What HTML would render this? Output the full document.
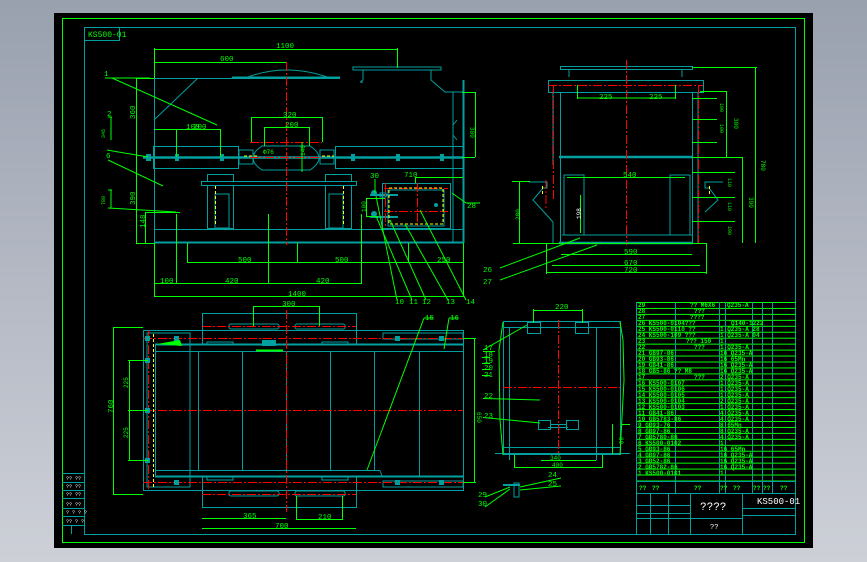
<!DOCTYPE html>
<html><head><meta charset="utf-8"><style>
html,body{margin:0;padding:0;width:867px;height:562px;overflow:hidden;background:linear-gradient(180deg,#99a0ae 0%,#b4b9c4 50%,#cdd0d7 100%);}
svg{position:absolute;left:0;top:0}
text{font-family:"Liberation Mono","DejaVu Sans Mono",monospace;}
</style></head><body>
<svg width="867" height="562" viewBox="0 0 867 562" xmlns="http://www.w3.org/2000/svg">
<defs>
<pattern id="rows" x="0" y="302" width="10" height="5.95" patternUnits="userSpaceOnUse"><line x1="0" y1="0.5" x2="10" y2="0.5" stroke="#00ff00" stroke-width="1"/></pattern>
</defs>
<rect x="54" y="13" width="759" height="535" fill="#000"/>
<rect x="62.5" y="18.5" width="742" height="524" fill="none" stroke="#00ff00"/>
<rect x="84.5" y="27.5" width="711" height="507" fill="none" stroke="#00a0a0"/>
<rect x="84.5" y="27.5" width="35" height="13" fill="none" stroke="#00a0a0"/>
<text x="88" y="37" font-size="8" fill="#00ff00">KS500-01</text>

<g fill="none" stroke="#00a0a0" stroke-width="1">
<line x1="154" y1="78.5" x2="340" y2="78.5"/>
<line x1="232" y1="77.5" x2="340" y2="77.5" stroke-width="2"/>
<path d="M245 78 Q286 62 330 78"/>
<line x1="154.5" y1="78" x2="154.5" y2="243"/>
<line x1="198" y1="78" x2="154" y2="120"/>
<rect x="353" y="67" width="88" height="3"/>
<path d="M431 70 L431 80 L445 92 L453 92 L453 243"/>
<path d="M363 70 L363 80 Q358 83 363 82"/>
<line x1="463.5" y1="80" x2="463.5" y2="243" stroke-width="2"/>
<line x1="453" y1="92" x2="463" y2="92"/>
<path d="M457 120 L453 125 L453 135 L457 140"/>
<rect x="153.5" y="146.5" width="85" height="22"/>
<rect x="335.5" y="146.5" width="128" height="22"/>
<rect x="239" y="150" width="14" height="14"/>
<rect x="320" y="150" width="14" height="14"/>
<path d="M262 146 L310 146 Q328 158 310 170 L262 170 Q244 158 262 146 Z"/>
<line x1="143" y1="157.5" x2="463" y2="157.5" stroke-width="2.5"/>
<rect x="207.5" y="174.5" width="26" height="7"/>
<rect x="325.5" y="174.5" width="26" height="7"/>
<rect x="201.5" y="181.5" width="155" height="4"/>
<rect x="207.5" y="185.5" width="26" height="43"/>
<rect x="325.5" y="185.5" width="26" height="43"/>
<rect x="215" y="194" width="14" height="34"/>
<rect x="329" y="194" width="14" height="34"/>
<line x1="154" y1="229.5" x2="463" y2="229.5"/>
<line x1="154" y1="242.5" x2="463" y2="242.5" stroke-width="2"/>
<rect x="382.5" y="183.5" width="68" height="45"/>
<rect x="388" y="190" width="56" height="36"/>
<rect x="380" y="193" width="6" height="4"/>
<line x1="370" y1="195" x2="398" y2="195" stroke-width="2"/>
<line x1="370" y1="217" x2="398" y2="217" stroke-width="2"/>

<rect x="560.5" y="66.5" width="132" height="3"/>
<line x1="569" y1="69" x2="569" y2="77"/><line x1="682" y1="69" x2="682" y2="77"/>
<rect x="548.5" y="80.5" width="155" height="12"/>
<rect x="560.5" y="92.5" width="132" height="151"/>
<line x1="553" y1="92" x2="553" y2="165"/><line x1="698" y1="92" x2="698" y2="243"/>
<line x1="559" y1="157" x2="693" y2="157" stroke-width="2.5"/>
<line x1="559" y1="243" x2="693" y2="243" stroke-width="2.5"/>
<rect x="564" y="175" width="20" height="60"/>
<rect x="670" y="175" width="20" height="60"/>
<line x1="562" y1="235" x2="692" y2="235"/>
<path d="M529 182 L547 182 L547 188 L543 188 L533 200 L553 222 L553 243"/>
<path d="M723 182 L705 182 L705 188 L709 188 L718 200 L705 212"/>

<rect x="143.5" y="330.5" width="320" height="160"/>
<line x1="155" y1="344.5" x2="463" y2="344.5" stroke-width="2"/>
<line x1="155" y1="351.5" x2="463" y2="351.5"/>
<line x1="155" y1="470.5" x2="380" y2="470.5"/>
<line x1="380" y1="470.5" x2="382" y2="476"/>
<line x1="155" y1="476.5" x2="463" y2="476.5" stroke-width="2"/>
<line x1="155.5" y1="344" x2="155.5" y2="476"/>
<line x1="198.5" y1="351" x2="198.5" y2="470"/><line x1="242.5" y1="351" x2="242.5" y2="470"/>
<line x1="286.5" y1="351" x2="286.5" y2="470"/><line x1="330.5" y1="351" x2="330.5" y2="470"/>
<line x1="374.5" y1="351" x2="374.5" y2="470"/><line x1="419.5" y1="351" x2="419.5" y2="476"/>
<rect x="202.5" y="313.5" width="154" height="31"/>
<rect x="202.5" y="476.5" width="154" height="31"/>
<rect x="229" y="324" width="50" height="5" rx="2"/><rect x="295" y="324" width="50" height="5" rx="2"/>
<rect x="229" y="491" width="50" height="5" rx="2"/><rect x="295" y="491" width="50" height="5" rx="2"/>
<rect x="147" y="333" width="43" height="154"/>
<rect x="383" y="333" width="80" height="6"/><rect x="383" y="481" width="80" height="6"/>
<rect x="207" y="342" width="26" height="3"/><rect x="322" y="342" width="26" height="3"/>
<rect x="207" y="477" width="26" height="3"/><rect x="322" y="477" width="26" height="3"/>

<rect x="503.5" y="321.5" width="117" height="133"/>
<line x1="503" y1="327.5" x2="620" y2="327.5"/>
<line x1="503" y1="447.5" x2="620" y2="447.5"/>
<line x1="509.5" y1="327" x2="509.5" y2="460"/><line x1="596.5" y1="327" x2="596.5" y2="460"/>
<line x1="495" y1="453.5" x2="630" y2="453.5"/>
<rect x="527.5" y="322.5" width="13" height="11"/><rect x="575.5" y="322.5" width="13" height="11"/>
<rect x="538.5" y="420.5" width="12" height="9"/><rect x="566.5" y="420.5" width="12" height="9"/>
<line x1="550" y1="424.5" x2="566" y2="424.5"/><line x1="548" y1="427.5" x2="568" y2="427.5"/>
<line x1="503" y1="485" x2="520" y2="485" stroke-width="2"/>
<rect x="514" y="483" width="5" height="14"/>
</g>

<g stroke="#ff0000" stroke-width="1" stroke-dasharray="9,2,2,2" fill="none">
<line x1="286.5" y1="62" x2="286.5" y2="245"/>
<line x1="250" y1="157.5" x2="322" y2="157.5"/>
<line x1="250" y1="142.5" x2="322" y2="142.5"/>
<line x1="626.5" y1="60" x2="626.5" y2="245"/>
<line x1="548" y1="85.5" x2="703" y2="85.5"/>
<line x1="553.5" y1="85" x2="553.5" y2="200"/><line x1="698.5" y1="85" x2="698.5" y2="243"/>
<line x1="143" y1="410.5" x2="463" y2="410.5"/>
<line x1="286.5" y1="310" x2="286.5" y2="512"/>
<line x1="143" y1="338.5" x2="463" y2="338.5"/>
<line x1="143" y1="482.5" x2="463" y2="482.5"/>
<line x1="202" y1="326.5" x2="356" y2="326.5"/>
<line x1="202" y1="494.5" x2="356" y2="494.5"/>
<line x1="148.5" y1="330" x2="148.5" y2="491"/>
<line x1="558.5" y1="320" x2="558.5" y2="455"/>
<line x1="503" y1="387.5" x2="620" y2="387.5"/>
<line x1="384" y1="188.5" x2="448" y2="188.5"/>
<line x1="384" y1="211.5" x2="448" y2="211.5"/>
<line x1="417.5" y1="183" x2="417.5" y2="228"/>
<line x1="385.5" y1="183" x2="385.5" y2="228"/>
<line x1="546" y1="180" x2="546" y2="210"/>
</g>
<g stroke="#ffff00" stroke-dasharray="3,2" fill="none">
<rect x="389" y="188" width="54" height="36"/>
<line x1="215.5" y1="186" x2="215.5" y2="226"/><line x1="343.5" y1="186" x2="343.5" y2="226"/>
<line x1="244" y1="156" x2="258" y2="156"/><line x1="322" y1="156" x2="334" y2="156"/>
<line x1="153.5" y1="334" x2="153.5" y2="487"/>
<line x1="542.5" y1="186" x2="542.5" y2="194"/><line x1="709.5" y1="186" x2="709.5" y2="194"/>
</g>
<g fill="#00a0a0">
<rect x="146" y="154" width="5" height="7"/><rect x="175" y="154" width="4" height="7"/><rect x="220" y="154" width="4" height="7"/>
<rect x="351" y="154" width="4" height="7"/><rect x="396" y="154" width="4" height="7"/><rect x="440" y="154" width="4" height="7"/>
<rect x="145" y="336" width="5" height="5"/><rect x="174" y="336" width="5" height="5"/><rect x="395" y="336" width="5" height="5"/><rect x="439" y="336" width="5" height="5"/>
<rect x="145" y="358" width="5" height="5"/><rect x="145" y="408" width="5" height="5"/><rect x="145" y="458" width="5" height="5"/>
<rect x="174" y="480" width="5" height="5"/><rect x="395" y="480" width="5" height="5"/><rect x="439" y="480" width="5" height="5"/>
<rect x="262" y="340" width="14" height="6"/>
<circle cx="374" cy="193" r="3"/><circle cx="374" cy="214" r="3"/><circle cx="436" cy="205" r="2"/>
</g>

<g stroke="#00ff00" stroke-width="1" fill="none">
<line x1="154" y1="49.5" x2="397" y2="49.5"/><line x1="154.5" y1="48" x2="154.5" y2="78"/><line x1="397.5" y1="48" x2="397.5" y2="68"/>
<line x1="154" y1="62.5" x2="286" y2="62.5"/>
<line x1="136.5" y1="78" x2="136.5" y2="243"/><line x1="136" y1="78.5" x2="154" y2="78.5"/><line x1="136" y1="243.5" x2="154" y2="243.5"/>
<line x1="145.5" y1="212" x2="145.5" y2="243"/><line x1="145" y1="212.5" x2="180" y2="212.5"/>
<line x1="154" y1="129.5" x2="220" y2="129.5"/><line x1="176.5" y1="129" x2="176.5" y2="157"/><line x1="220.5" y1="129" x2="220.5" y2="157"/>
<line x1="251" y1="117.5" x2="322" y2="117.5"/><line x1="251.5" y1="117" x2="251.5" y2="142"/><line x1="322.5" y1="117" x2="322.5" y2="142"/>
<line x1="264" y1="127.5" x2="309" y2="127.5"/><line x1="264.5" y1="127" x2="264.5" y2="146"/><line x1="309.5" y1="127" x2="309.5" y2="146"/>
<line x1="302" y1="142" x2="302" y2="172"/>
<line x1="462" y1="92.5" x2="475" y2="92.5"/><line x1="475.5" y1="92" x2="475.5" y2="157"/><line x1="462" y1="157.5" x2="475" y2="157.5"/>
<line x1="187" y1="262.5" x2="463" y2="262.5"/><line x1="187.5" y1="243" x2="187.5" y2="263"/><line x1="297.5" y1="243" x2="297.5" y2="263"/><line x1="408.5" y1="243" x2="408.5" y2="263"/>
<line x1="154" y1="283.5" x2="361" y2="283.5"/><line x1="176.5" y1="214" x2="176.5" y2="284"/><line x1="268.5" y1="214" x2="268.5" y2="284"/><line x1="361.5" y1="214" x2="361.5" y2="284"/>
<line x1="154" y1="296.5" x2="463" y2="296.5"/><line x1="154.5" y1="243" x2="154.5" y2="297"/><line x1="463.5" y1="243" x2="463.5" y2="297"/>
<line x1="415" y1="177.5" x2="463" y2="177.5"/><line x1="415.5" y1="177" x2="415.5" y2="183"/>
<line x1="366" y1="198.5" x2="385" y2="198.5"/><line x1="366" y1="216.5" x2="378" y2="216.5"/><line x1="366.5" y1="198" x2="366.5" y2="217"/>
<line x1="375" y1="179" x2="375" y2="193"/>
<line x1="105" y1="78" x2="150" y2="78"/><line x1="112" y1="78" x2="217" y2="125"/>
<line x1="107" y1="150" x2="148" y2="157"/><line x1="108" y1="160" x2="163" y2="186"/>
<line x1="108" y1="208" x2="176" y2="212"/>
<line x1="108" y1="117" x2="112" y2="117"/><line x1="111" y1="117" x2="111" y2="140"/>
<line x1="108" y1="190" x2="112" y2="190"/><line x1="111" y1="190" x2="111" y2="208"/>
<line x1="376" y1="196" x2="397" y2="300"/><line x1="376" y1="216" x2="412" y2="300"/>
<line x1="390" y1="220" x2="426" y2="300"/><line x1="405" y1="224" x2="448" y2="300"/><line x1="420" y1="210" x2="466" y2="300"/>
<line x1="452" y1="193" x2="466" y2="203"/><line x1="466" y1="203" x2="480" y2="203"/>
<line x1="577" y1="98" x2="675" y2="98"/><line x1="577.5" y1="85" x2="577.5" y2="99"/><line x1="675.5" y1="85" x2="675.5" y2="99"/>
<line x1="692" y1="67.5" x2="757" y2="67.5"/><line x1="755.5" y1="67" x2="755.5" y2="243"/>
<line x1="700" y1="91.5" x2="727" y2="91.5"/><line x1="726.5" y1="91" x2="726.5" y2="157"/>
<line x1="692" y1="157.5" x2="743" y2="157.5"/><line x1="742.5" y1="157" x2="742.5" y2="243"/>
<line x1="692" y1="98.5" x2="717" y2="98.5"/><line x1="692" y1="119.5" x2="717" y2="119.5"/><line x1="692" y1="142.5" x2="717" y2="142.5"/>
<line x1="692" y1="172.5" x2="735" y2="172.5"/><line x1="692" y1="197.5" x2="735" y2="197.5"/><line x1="692" y1="221.5" x2="735" y2="221.5"/>
<line x1="567" y1="177.5" x2="685" y2="177.5"/>
<line x1="580.5" y1="195" x2="580.5" y2="233"/>
<line x1="512" y1="181.5" x2="530" y2="181.5"/><line x1="519.5" y1="181" x2="519.5" y2="243"/>
<line x1="513" y1="243.5" x2="706" y2="243.5"/>
<line x1="561" y1="254.5" x2="692" y2="254.5"/><line x1="552" y1="265.5" x2="700" y2="265.5"/><line x1="546" y1="272.5" x2="706" y2="272.5"/>
<line x1="546.5" y1="243" x2="546.5" y2="274"/><line x1="706.5" y1="243" x2="706.5" y2="274"/>
<line x1="500" y1="268" x2="580" y2="238"/><line x1="500" y1="280" x2="597" y2="245"/>
<line x1="113.5" y1="327" x2="113.5" y2="494"/><line x1="113" y1="327.5" x2="143" y2="327.5"/><line x1="113" y1="494.5" x2="143" y2="494.5"/>
<line x1="129.5" y1="360" x2="129.5" y2="460"/><line x1="128" y1="360.5" x2="148" y2="360.5"/><line x1="128" y1="410.5" x2="148" y2="410.5"/><line x1="128" y1="460.5" x2="148" y2="460.5"/>
<line x1="463" y1="338.5" x2="476" y2="338.5"/><line x1="474.5" y1="338" x2="474.5" y2="482"/><line x1="463" y1="482.5" x2="476" y2="482.5"/>
<line x1="253" y1="306.5" x2="319" y2="306.5"/><line x1="253.5" y1="306" x2="253.5" y2="326"/><line x1="319.5" y1="306" x2="319.5" y2="326"/>
<line x1="202" y1="518.5" x2="286" y2="518.5"/><line x1="296" y1="519.5" x2="342" y2="519.5"/>
<line x1="296.5" y1="496" x2="296.5" y2="520"/><line x1="342.5" y1="496" x2="342.5" y2="520"/>
<line x1="202" y1="528.5" x2="356" y2="528.5"/>
<line x1="424" y1="318" x2="367" y2="470"/><line x1="424" y1="318" x2="433" y2="318"/>
<line x1="449" y1="318" x2="444" y2="349"/><line x1="449" y1="318" x2="458" y2="318"/>
<path d="M157 344 L180 340 L182 346 Z" fill="#00ff00" stroke="none"/>
<line x1="256" y1="350.5" x2="283" y2="350.5" stroke-width="2"/>
<line x1="533.5" y1="309" x2="533.5" y2="323"/><line x1="582.5" y1="309" x2="582.5" y2="323"/><line x1="533" y1="310.5" x2="583" y2="310.5"/>
<line x1="541" y1="460.5" x2="596" y2="460.5"/><line x1="514" y1="467.5" x2="602" y2="467.5"/>
<line x1="514.5" y1="455" x2="514.5" y2="468"/><line x1="602.5" y1="455" x2="602.5" y2="468"/>
<path d="M503 322 L499 350 L500 420 L503 455"/>
<path d="M620 322 L623 340 L624 380 L620 455"/>
<line x1="622" y1="424.5" x2="630" y2="424.5"/><line x1="612.5" y1="424" x2="612.5" y2="454"/>
<line x1="483" y1="350" x2="527" y2="325"/><line x1="483" y1="351.5" x2="495" y2="351.5"/>
<line x1="483" y1="398.5" x2="540" y2="400"/><line x1="483" y1="417.5" x2="540" y2="423"/>
<line x1="520" y1="487" x2="561" y2="478"/><line x1="520" y1="490" x2="561" y2="486"/>
<line x1="485" y1="497" x2="510" y2="487"/><line x1="485" y1="507" x2="510" y2="489"/>
<line x1="482" y1="357.5" x2="490" y2="357.5"/><line x1="482" y1="363.5" x2="490" y2="363.5"/><line x1="482" y1="369.5" x2="490" y2="369.5"/><line x1="482" y1="375.5" x2="490" y2="375.5"/>
</g>

<g font-size="7.5" fill="#00ff00">
<text x="276" y="48">1100</text><text x="220" y="61">600</text>
<text x="186" y="129">100</text><text x="193" y="129">200</text>
<text x="283" y="117">320</text><text x="285" y="127">200</text>
<text x="305" y="156" font-size="6" transform="rotate(-90 305 156)">140</text>
<text x="263" y="154" font-size="6">Φ76</text>
<text x="404" y="177">710</text><text x="370" y="178">30</text>
<text x="470" y="127" transform="rotate(90 470 127)" font-size="6">300</text>
<text x="135" y="119" transform="rotate(-90 135 119)">360</text>
<text x="135" y="205" transform="rotate(-90 135 205)">390</text>
<text x="145" y="228" transform="rotate(-90 145 228)">148</text>
<text x="366" y="212" font-size="6" transform="rotate(-90 366 212)">100</text>
<text x="238" y="262">500</text><text x="335" y="262">500</text><text x="437" y="262">250</text>
<text x="160" y="283">100</text><text x="225" y="283">420</text><text x="316" y="283">420</text>
<text x="288" y="296">1400</text>
<text x="104" y="76">1</text><text x="107" y="116">2</text><text x="106" y="158">6</text>
<text x="105" y="138" font-size="5" transform="rotate(-90 105 138)">345</text>
<text x="105" y="205" font-size="5" transform="rotate(-90 105 205)">789</text>
<text x="395" y="304">10</text><text x="409" y="304">11</text><text x="422" y="304">12</text><text x="446" y="304">13</text><text x="466" y="304">14</text>
<text x="467" y="208">28</text>
<text x="599" y="99">225</text><text x="649" y="99">225</text>
<text x="623" y="177">540</text>
<text x="581" y="219" fill="#fff" font-size="6" transform="rotate(-90 581 219)">198</text>
<text x="624" y="254">590</text><text x="624" y="265">670</text><text x="624" y="272">720</text>
<text x="520" y="220" transform="rotate(-90 520 220)" font-size="6">280</text>
<text x="761" y="160" transform="rotate(90 761 160)" font-size="6">780</text>
<text x="720" y="103" transform="rotate(90 720 103)" font-size="5">100</text>
<text x="720" y="124" transform="rotate(90 720 124)" font-size="5">100</text>
<text x="734" y="118" transform="rotate(90 734 118)" font-size="6">300</text>
<text x="749" y="197" transform="rotate(90 749 197)" font-size="6">390</text>
<text x="728" y="178" transform="rotate(90 728 178)" font-size="5">110</text>
<text x="728" y="202" transform="rotate(90 728 202)" font-size="5">110</text>
<text x="728" y="226" transform="rotate(90 728 226)" font-size="5">100</text>
<text x="483" y="272">26</text><text x="483" y="284">27</text>
<text x="282" y="306">300</text>
<text x="113" y="413" transform="rotate(-90 113 413)">760</text>
<text x="128" y="388" font-size="6" transform="rotate(-90 128 388)">225</text>
<text x="128" y="438" font-size="6" transform="rotate(-90 128 438)">225</text>
<text x="477" y="412" font-size="6" transform="rotate(90 477 412)">650</text>
<text x="243" y="518">365</text><text x="318" y="519">210</text><text x="275" y="528">700</text>
<text x="425" y="320">15</text><text x="450" y="320">16</text>
<text x="555" y="309">220</text>
<text x="484" y="350">17</text><text x="484" y="357">18</text><text x="484" y="363">19</text><text x="484" y="370">20</text><text x="484" y="377">21</text>
<text x="484" y="398">22</text><text x="484" y="418">23</text>
<text x="550" y="460" font-size="6">340</text><text x="552" y="467" font-size="6">400</text>
<text x="619" y="437" font-size="6" transform="rotate(90 619 437)">80</text>
<text x="548" y="477">24</text><text x="548" y="486">25</text>
<text x="478" y="497">29</text><text x="478" y="506">30</text>
</g>

<rect x="636" y="302" width="160" height="179" fill="url(#rows)"/>
<g stroke="#00a0a0" fill="none">
<line x1="636.5" y1="302" x2="636.5" y2="534"/>
<line x1="675.5" y1="302" x2="675.5" y2="493"/>
<line x1="719.5" y1="302" x2="719.5" y2="493"/>
<line x1="725.5" y1="302" x2="725.5" y2="493"/>
<line x1="752.5" y1="302" x2="752.5" y2="493"/>
<line x1="762.5" y1="302" x2="762.5" y2="493"/>
<line x1="772.5" y1="302" x2="772.5" y2="493"/>
<line x1="636" y1="481.5" x2="796" y2="481.5"/>
<line x1="636" y1="493.5" x2="796" y2="493.5"/>
<line x1="690.5" y1="493" x2="690.5" y2="534"/>
<line x1="742.5" y1="493" x2="742.5" y2="534"/>
<line x1="690" y1="518.5" x2="742" y2="518.5"/>
<line x1="742" y1="508.5" x2="796" y2="508.5"/>
<line x1="742" y1="515.5" x2="796" y2="515.5"/>
<line x1="636" y1="505.5" x2="690" y2="505.5"/><line x1="636" y1="513.5" x2="690" y2="513.5"/><line x1="636" y1="518.5" x2="690" y2="518.5"/>
<line x1="650.5" y1="493" x2="650.5" y2="534"/><line x1="668.5" y1="493" x2="668.5" y2="534"/>
<line x1="62" y1="473.5" x2="84" y2="473.5"/><line x1="62" y1="482.5" x2="84" y2="482.5"/><line x1="62" y1="490.5" x2="84" y2="490.5"/>
<line x1="62" y1="498.5" x2="84" y2="498.5"/><line x1="62" y1="508.5" x2="84" y2="508.5"/><line x1="62" y1="516.5" x2="84" y2="516.5"/><line x1="62" y1="525.5" x2="84" y2="525.5"/>
<line x1="71.5" y1="525" x2="71.5" y2="534"/>
</g>
<g font-size="6" font-weight="bold" fill="#00ff00">
<text x="638" y="307">29</text><text x="690" y="307">?? M6X6</text><text x="727" y="307">Q235-A</text>
<text x="638" y="313">28</text><text x="694" y="313">???</text>
<text x="638" y="319">27</text><text x="690" y="319">????</text>
<text x="638" y="325">26 KS500-0104???</text><text x="731" y="325">Q140-1222</text>
<text x="638" y="331">25 KS500-0110 ??</text><text x="720" y="331">1 Q235-A 28</text>
<text x="638" y="337">24 KS500-109 ???</text><text x="720" y="337">1 Q235-A 04</text>
<text x="638" y="343">23</text><text x="686" y="343">??? 150</text><text x="720" y="343">1</text>
<text x="638" y="349">22</text><text x="694" y="349">???</text><text x="720" y="349">1 Q235-A</text>
<text x="638" y="355">21 GB97-86</text><text x="720" y="355">16 Q235-A</text>
<text x="638" y="361">20 GB93-86</text><text x="720" y="361">16 65Mn</text>
<text x="638" y="367">19 GB41-86</text><text x="720" y="367">16 Q235-A</text>
<text x="638" y="373">18 GB5-86 ?? M8</text><text x="720" y="373">16 Q235-A</text>
<text x="638" y="379">17</text><text x="694" y="379">???</text><text x="720" y="379">2 Q235-A</text>
<text x="638" y="385">16 KS500-0107</text><text x="720" y="385">1 Q235-A</text>
<text x="638" y="391">15 KS500-0106</text><text x="720" y="391">1 Q235-A</text>
<text x="638" y="397">14 KS500-0105</text><text x="720" y="397">1 Q235-A</text>
<text x="638" y="403">13 KS500-0104</text><text x="720" y="403">2 Q235-A</text>
<text x="638" y="409">12 KS500-0103</text><text x="720" y="409">1 Q235-A</text>
<text x="638" y="415">11 GB41-86</text><text x="720" y="415">4 Q235-A</text>
<text x="638" y="421">10 GB5783-86</text><text x="720" y="421">4 Q235-A</text>
<text x="638" y="427">9 GB93-76</text><text x="720" y="427">8 65Mn</text>
<text x="638" y="433">8 GB97-86</text><text x="720" y="433">8 Q235-A</text>
<text x="638" y="439">7 GB5780-86</text><text x="720" y="439">4 Q235-A</text>
<text x="638" y="445">6 KS500-0102</text><text x="720" y="445">1</text>
<text x="638" y="451">5 GB93-86</text><text x="720" y="451">16 65Mn</text>
<text x="638" y="457">4 GB97-86</text><text x="720" y="457">16 Q235-A</text>
<text x="638" y="463">3 GB52-86</text><text x="720" y="463">16 Q235-A</text>
<text x="638" y="469">2 GB5782-86</text><text x="720" y="469">16 Q235-A</text>
<text x="638" y="475">1 KS500-0101</text><text x="720" y="475">1</text>
<text x="639" y="490">??</text><text x="652" y="490">??</text><text x="694" y="490">??</text><text x="720" y="490">??</text><text x="733" y="490">??</text><text x="753" y="490">??</text><text x="763" y="490">??</text><text x="780" y="490">??</text>
</g>
<g fill="#fff" font-family="Liberation Sans,sans-serif">
<text x="700" y="510" font-size="11">????</text>
<text x="710" y="529" font-size="7">??</text>
<text x="757" y="504" font-size="9">KS500-01</text>
<text x="66" y="480" font-size="5">?? ??</text><text x="66" y="488" font-size="5">?? ??</text>
<text x="66" y="496" font-size="5">?? ??</text><text x="66" y="506" font-size="5">?? ??</text>
<text x="66" y="514" font-size="5">? ? ? ?</text><text x="66" y="523" font-size="5">?? ? ?</text>
</g>
</svg>
</body></html>
